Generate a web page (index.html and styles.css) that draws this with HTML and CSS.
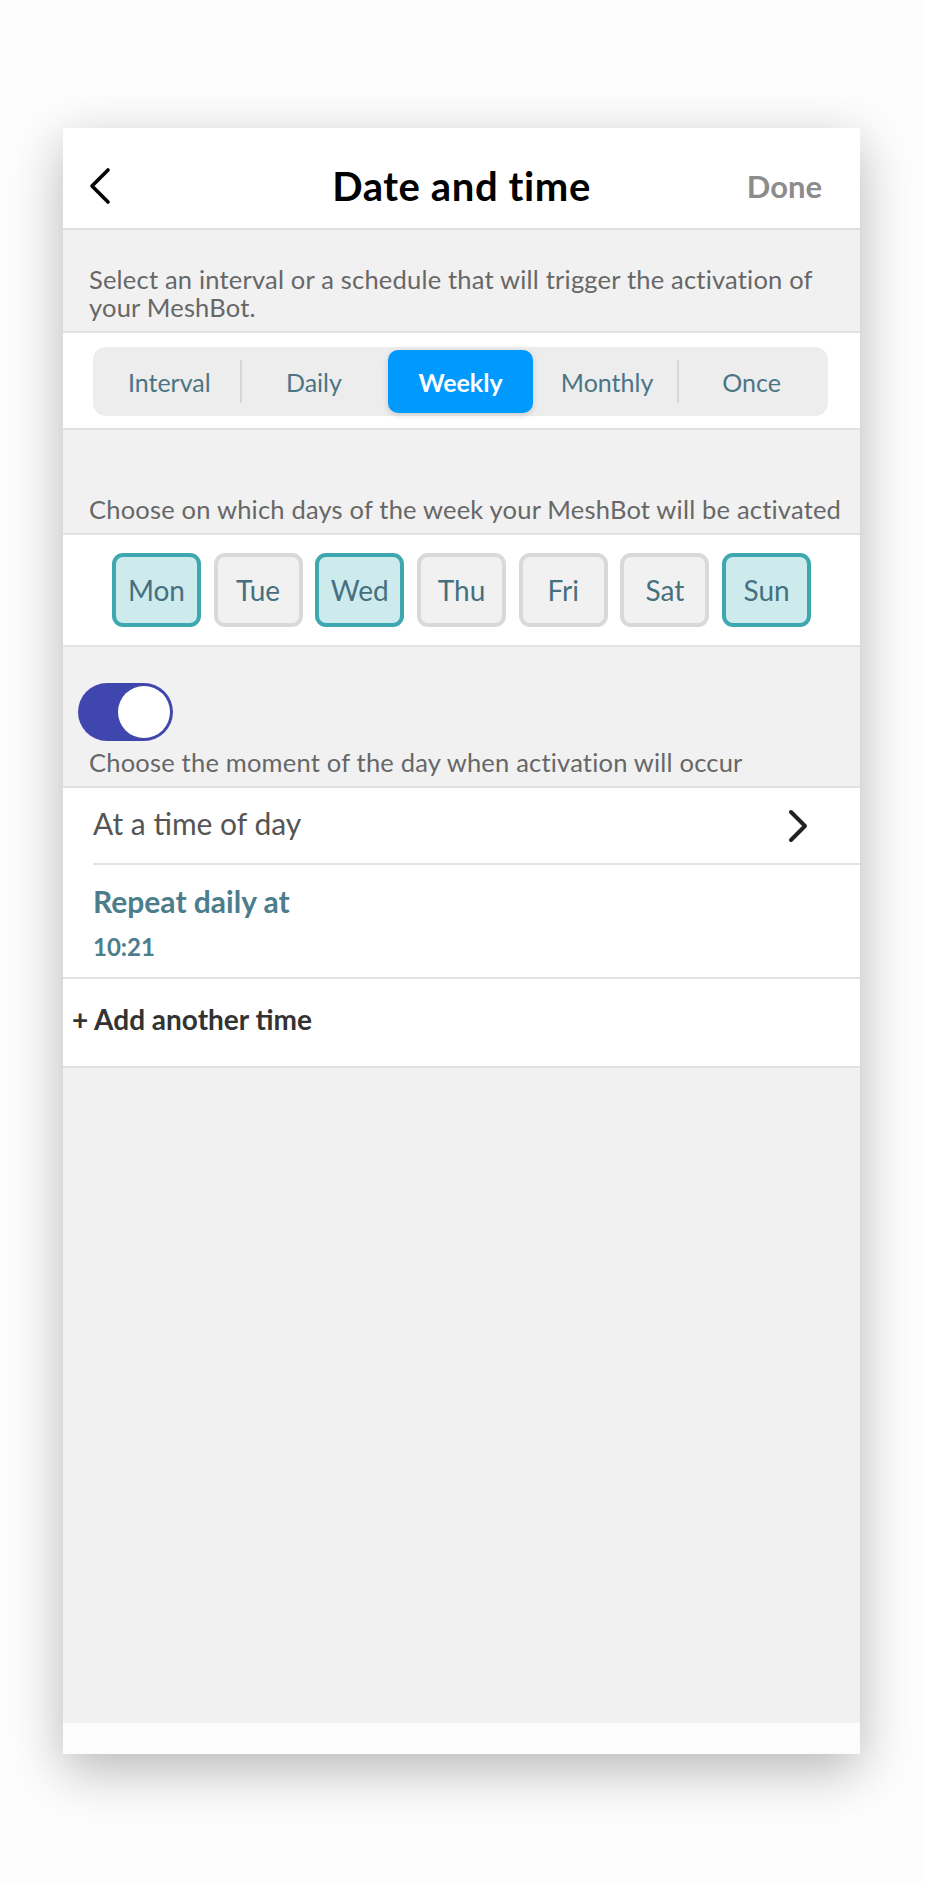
FILE: index.html
```html
<!DOCTYPE html>
<html>
<head>
  <meta charset="UTF-8">
  <title>Date and time</title>
  <link rel="stylesheet" href="styles.css">
</head>
<body>

  <div class="phone">

    <!-- Header -->
    <div class="header">
      <button class="back" aria-label="Back">
        <svg width="24" height="38" viewBox="0 0 24 38">
          <polyline points="20,3 4,19 20,35" fill="none" stroke="#000" stroke-width="3.6" stroke-linecap="round" stroke-linejoin="round"/>
        </svg>
      </button>
      <h1 class="title">Date and time</h1>
      <span class="done">Done</span>
    </div>

    <div class="note note-intro">
      Select an interval or a schedule that will trigger the activation of your MeshBot.
    </div>

    <div class="panel panel-tabs">
      <div class="tabs">
        <span class="tab">Interval</span>
        <span class="tab">Daily</span>
        <span class="tab active">Weekly</span>
        <span class="tab">Monthly</span>
        <span class="tab">Once</span>
      </div>
    </div>

    <div class="note note-days">
      Choose on which days of the week your MeshBot will be activated
    </div>

    <div class="panel panel-days">
      <span class="day on">Mon</span>
      <span class="day">Tue</span>
      <span class="day on">Wed</span>
      <span class="day">Thu</span>
      <span class="day">Fri</span>
      <span class="day">Sat</span>
      <span class="day on">Sun</span>
    </div>

    <div class="note note-moment">
      <div class="toggle"><span class="knob"></span></div>
      <p>Choose the moment of the day when activation will occur</p>
    </div>

    <div class="list">
      <div class="row-select">
        <span>At a time of day</span>
        <svg width="22" height="34" viewBox="0 0 22 34">
          <polyline points="3,3 17,17 3,31" fill="none" stroke="#222" stroke-width="4" stroke-linecap="round" stroke-linejoin="round"/>
        </svg>
      </div>
      <div class="repeat">
        <div class="repeat-label">Repeat daily at</div>
        <div class="repeat-time">10:21</div>
      </div>
      <div class="row-add">+ Add another time</div>
    </div>

    <div class="filler"></div>
    <div class="footer"></div>
  </div>

</body>
</html>
```

FILE: styles.css
```css
* {
  box-sizing: border-box;
}

body, html {
  margin: 0;
  padding: 0;
  background: #fdfdfd;
  font-family: Lato, "Open Sans", sans-serif;
}

body {
  padding-top: 128px;
  height: 1883px;
  overflow: hidden;
}

/* Phone card */
.phone {
  width: 797px;
  height: 1626px;
  margin: 0 auto 0 63px;
  background: #f1f1f1;
  display: flex;
  flex-direction: column;
  box-shadow: 0 16px 50px rgba(0, 0, 0, 0.28);
}

.header {
  height: 102px;
  padding: 16px 25px 0 25px;
  background: #fff;
  border-bottom: 2px solid #dedede;
  display: grid;
  grid-template-columns: 1fr auto 1fr;
  align-items: center;
}

.back {
  border: none;
  background: none;
  padding: 0;
  width: 24px;
  height: 38px;
}

.title {
  margin: 0;
  font-size: 40px;
  font-weight: 700;
  letter-spacing: 0.6px;
  color: #000;
}

.done {
  justify-self: end;
  margin-right: 13px;
  font-size: 31px;
  font-weight: 700;
  color: #8c8c8c;
}

/* Gray notes */
.note {
  padding: 0 8px 0 26px;
  font-size: 25.5px;
  line-height: 28px;
  letter-spacing: 0.2px;
  color: #676767;
  border-bottom: 2px solid #e2e2e2;
}

.note-intro {
  padding-top: 35px;
  padding-bottom: 10px;
}

.note-days {
  padding-top: 65px;
  padding-bottom: 10px;
}

.note-moment {
  padding: 36px 8px 10px 15px;
}

.note-moment p {
  margin: 7px 0 0 11px;
}

.panel {
  background: #fff;
  border-bottom: 2px solid #e2e2e2;
}

/* Segmented control */
.panel-tabs {
  padding: 14px 32px 12px 30px;
}

.tabs {
  height: 69px;
  padding: 3px 4px;
  background: #ededed;
  border-radius: 13px;
  display: flex;
}

.tab {
  flex: 1;
  display: flex;
  align-items: center;
  justify-content: center;
  font-size: 25px;
  color: #4b7585;
  position: relative;
}

.tab:nth-child(1)::after,
.tab:nth-child(4)::after {
  content: "";
  position: absolute;
  right: 0;
  top: 10px;
  bottom: 10px;
  width: 2px;
  background: #d6d6d6;
}

.tab.active {
  margin: 0 2px;
  background: #0099fe;
  color: #fff;
  font-weight: 700;
  border-radius: 10px;
  box-shadow: 0 2px 6px rgba(0, 0, 0, 0.15);
}

/* Day buttons */
.panel-days {
  padding: 18px 0;
  display: flex;
  justify-content: center;
  gap: 12.7px;
}

.day {
  width: 89px;
  height: 74px;
  border: 4px solid #d9d9d9;
  border-radius: 11px;
  background: #f1f1f1;
  display: flex;
  align-items: center;
  justify-content: center;
  font-size: 28px;
  color: #46707f;
}

.day.on {
  border-color: #3ea8b1;
  background: #cdeaed;
}

/* Toggle */
.toggle {
  width: 95px;
  height: 58px;
  border-radius: 29px;
  background: #3f46ad;
  padding: 3px;
  display: flex;
  justify-content: flex-end;
}

.knob {
  width: 52px;
  height: 52px;
  border-radius: 50%;
  background: #fff;
}

/* List */
.list {
  background: #fff;
  border-bottom: 2px solid #e2e2e2;
}

.row-select {
  height: 77px;
  margin-left: 30px;
  padding: 0 50px 6px 0;
  border-bottom: 2px solid #e2e2e2;
  display: flex;
  align-items: center;
  justify-content: space-between;
  font-size: 30px;
  color: #555;
}

.row-select svg {
  margin-top: 6px;
}

.repeat {
  padding: 18px 30px 15px;
  border-bottom: 2px solid #e2e2e2;
  color: #4c7d8d;
  font-weight: 700;
}

.repeat-label {
  font-size: 30px;
  line-height: 36px;
}

.repeat-time {
  margin-top: 13px;
  font-size: 24px;
  line-height: 30px;
}

.row-add {
  padding: 23px 0 30px 9px;
  font-size: 28px;
  line-height: 34px;
  font-weight: 700;
  color: #333;
}

.filler {
  flex: 1;
}

.footer {
  height: 32px;
  background: #fcfcfc;
  border-top: 1px solid #f4f4f4;
}
```
